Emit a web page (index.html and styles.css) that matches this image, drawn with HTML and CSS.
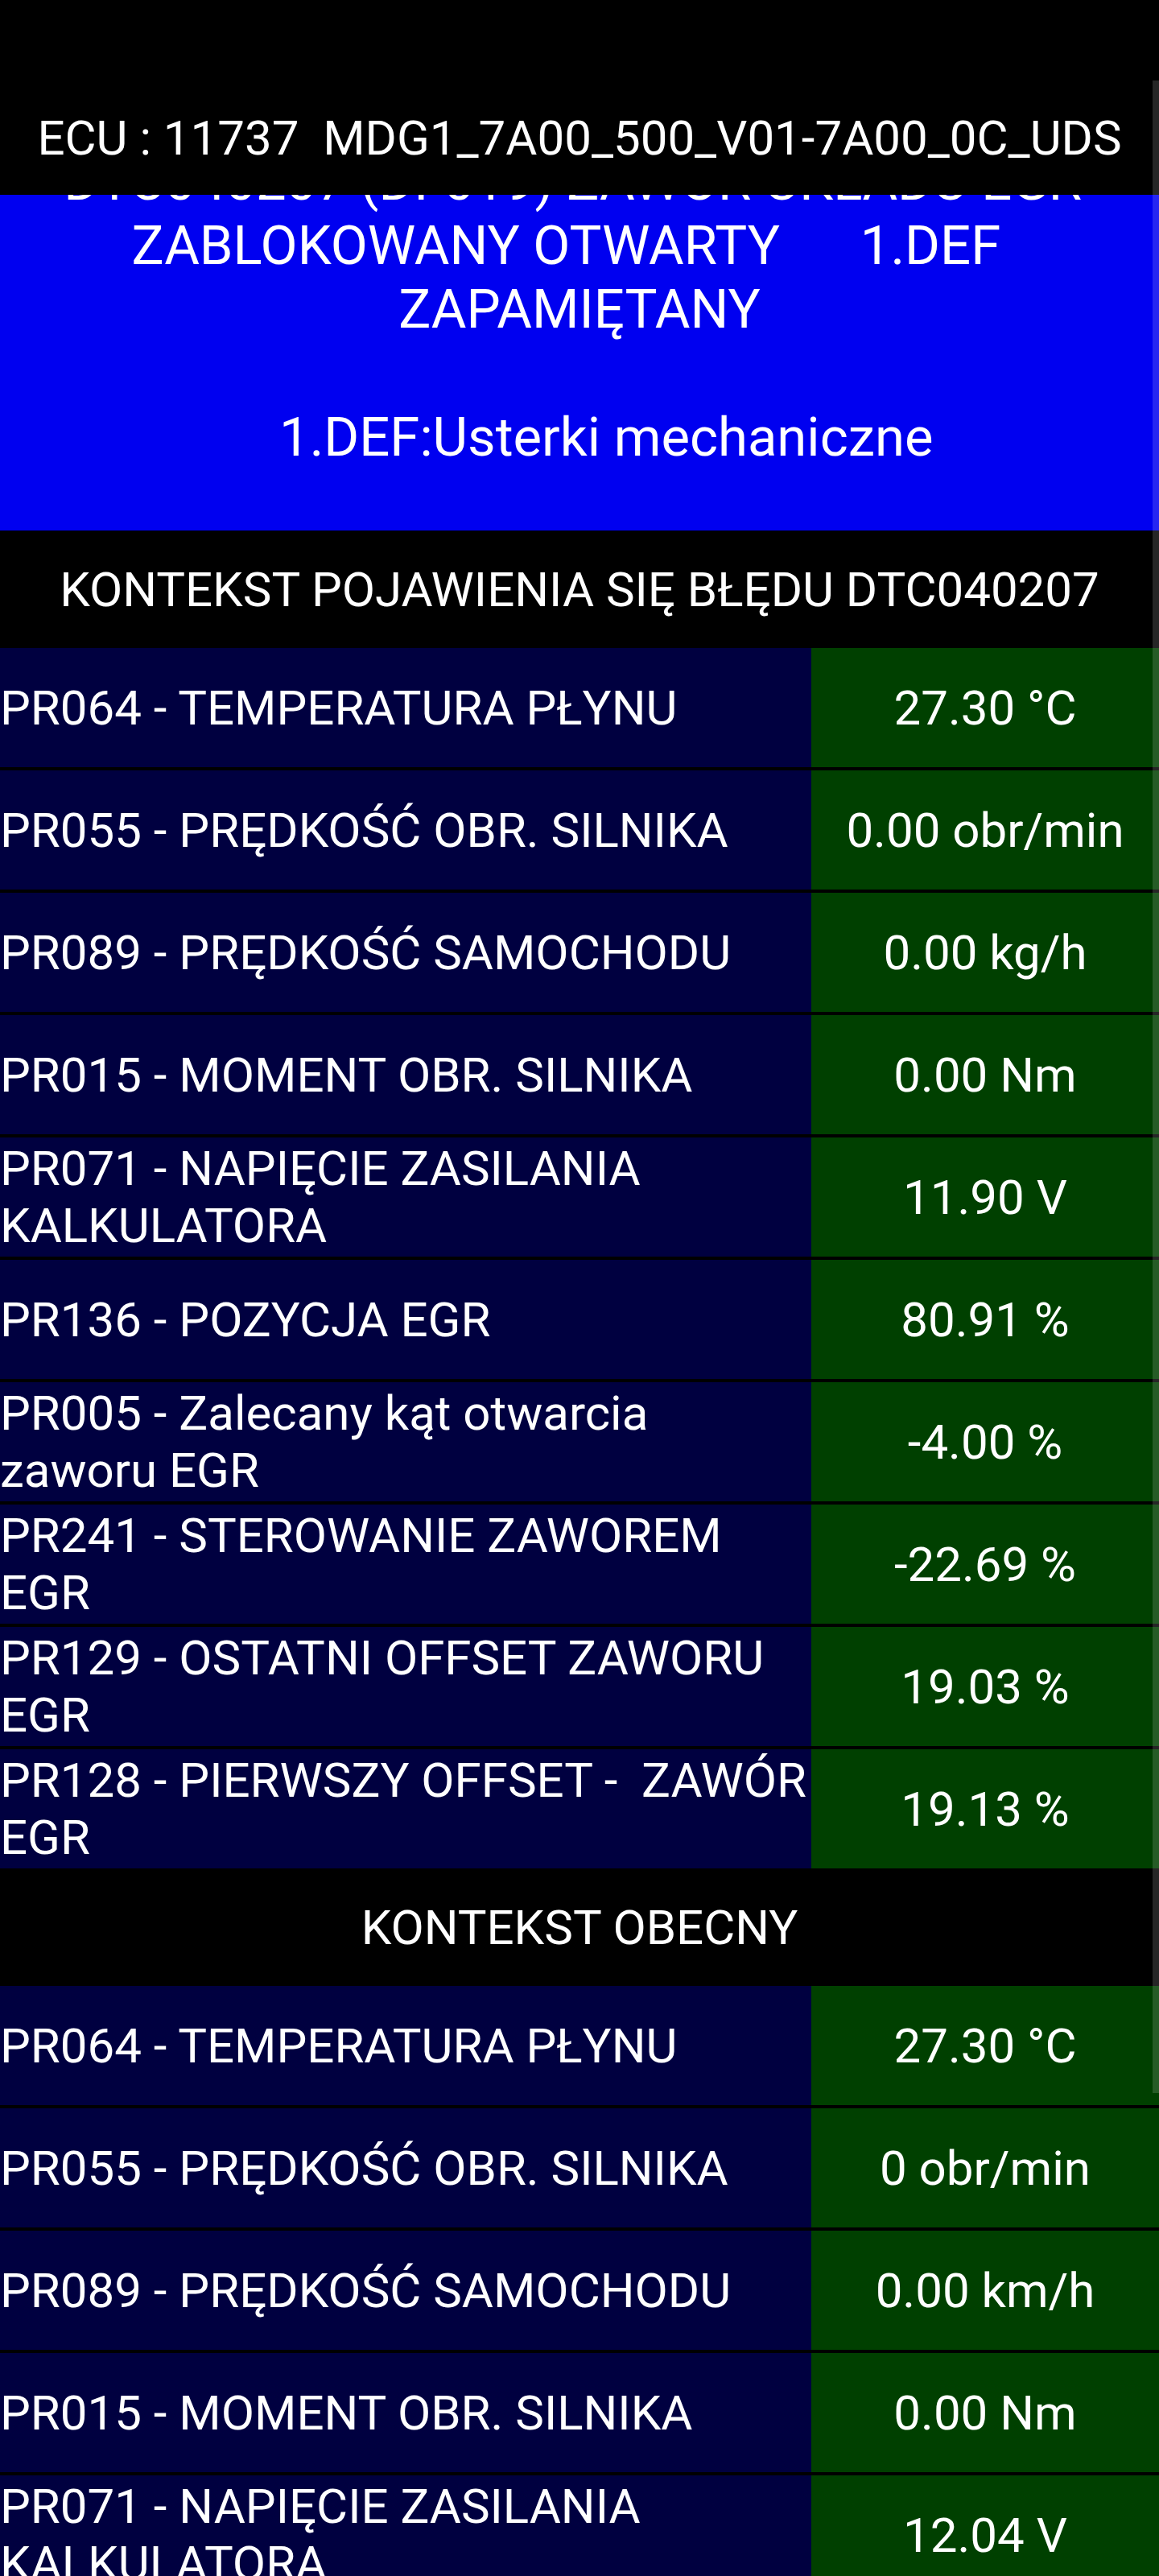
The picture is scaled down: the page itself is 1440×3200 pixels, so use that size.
FILE: index.html
```html
<!DOCTYPE html>
<html lang="pl">

<head>
    <meta charset="UTF-8">
    <meta name="viewport" content="width=device-width, initial-scale=1.0">
    <title>ECU - kontekst błędu</title>
    <link rel="stylesheet" href="styles.css">
</head>

<body>
<div class="screen">
    <header class="ecu">ECU : 11737  MDG1_7A00_500_V01-7A00_0C_UDS</header>

    <div class="fault">
        <p>DTC040207 (DF019) ZAWÓR UKŁADU EGR <br>ZABLOKOWANY OTWARTY      1.DEF  <br>ZAPAMIĘTANY<br><br>    1.DEF:Usterki mechaniczne</p>
    </div>

    <h2 class="section">KONTEKST POJAWIENIA SIĘ BŁĘDU DTC040207</h2>
    <div class="params">
        <div class="row"><div class="name">PR064 - TEMPERATURA PŁYNU</div><div class="val">27.30 °C</div></div>
        <div class="row"><div class="name">PR055 - PRĘDKOŚĆ OBR. SILNIKA</div><div class="val">0.00 obr/min</div></div>
        <div class="row"><div class="name">PR089 - PRĘDKOŚĆ SAMOCHODU</div><div class="val">0.00 kg/h</div></div>
        <div class="row"><div class="name">PR015 - MOMENT OBR. SILNIKA</div><div class="val">0.00 Nm</div></div>
        <div class="row"><div class="name">PR071 - NAPIĘCIE ZASILANIA KALKULATORA</div><div class="val">11.90 V</div></div>
        <div class="row"><div class="name">PR136 - POZYCJA EGR</div><div class="val">80.91 %</div></div>
        <div class="row"><div class="name">PR005 - Zalecany kąt otwarcia zaworu EGR</div><div class="val">-4.00 %</div></div>
        <div class="row"><div class="name">PR241 - STEROWANIE ZAWOREM EGR</div><div class="val">-22.69 %</div></div>
        <div class="row"><div class="name">PR129 - OSTATNI OFFSET ZAWORU EGR</div><div class="val">19.03 %</div></div>
        <div class="row"><div class="name">PR128 - PIERWSZY OFFSET -&nbsp; ZAWÓR EGR</div><div class="val">19.13 %</div></div>
    </div>

    <h2 class="section">KONTEKST OBECNY</h2>
    <div class="params">
        <div class="row"><div class="name">PR064 - TEMPERATURA PŁYNU</div><div class="val">27.30 °C</div></div>
        <div class="row"><div class="name">PR055 - PRĘDKOŚĆ OBR. SILNIKA</div><div class="val">0 obr/min</div></div>
        <div class="row"><div class="name">PR089 - PRĘDKOŚĆ SAMOCHODU</div><div class="val">0.00 km/h</div></div>
        <div class="row"><div class="name">PR015 - MOMENT OBR. SILNIKA</div><div class="val">0.00 Nm</div></div>
        <div class="row"><div class="name">PR071 - NAPIĘCIE ZASILANIA KALKULATORA</div><div class="val">12.04 V</div></div>
    </div>

    <div class="scrollbar"></div>
</div>
</body>

</html>
```

FILE: styles.css
```css
body {
    margin: 0;
    padding: 0;
    background: #000;
    color: #fff;
    font-family: Roboto, "Noto Sans", sans-serif
}

.screen {
    position: relative;
    height: 3200px;
    overflow: hidden
}

/* top bar, status bar area included */
.ecu {
    box-sizing: border-box;
    height: 242px;
    padding-top: 100px;
    display: flex;
    align-items: center;
    justify-content: center;
    font-size: 60px;
    white-space: pre
}

/* list is scrolled a bit, first line sits under the bar */
.fault {
    height: 417px;
    overflow: hidden;
    background: #0000f0
}

.fault p {
    margin: -56px 0 0;
    font-size: 67px;
    line-height: 79.5px;
    text-align: center;
    white-space: break-spaces
}

.section {
    margin: 0;
    height: 146px;
    display: flex;
    align-items: center;
    justify-content: center;
    font-size: 60px;
    font-weight: 400
}

.params {
    display: flex;
    flex-direction: column;
    gap: 4px
}

.row {
    display: grid;
    grid-template-columns: 1008px 1fr;
    height: 148px;
    font-size: 60px
}

.name {
    display: flex;
    align-items: center;
    background: #000040
}

.val {
    display: flex;
    align-items: center;
    justify-content: center;
    background: #004000
}

.scrollbar {
    position: absolute;
    top: 100px;
    right: 0;
    width: 8px;
    height: 2500px;
    background: rgba(255, 255, 255, .15)
}
```
